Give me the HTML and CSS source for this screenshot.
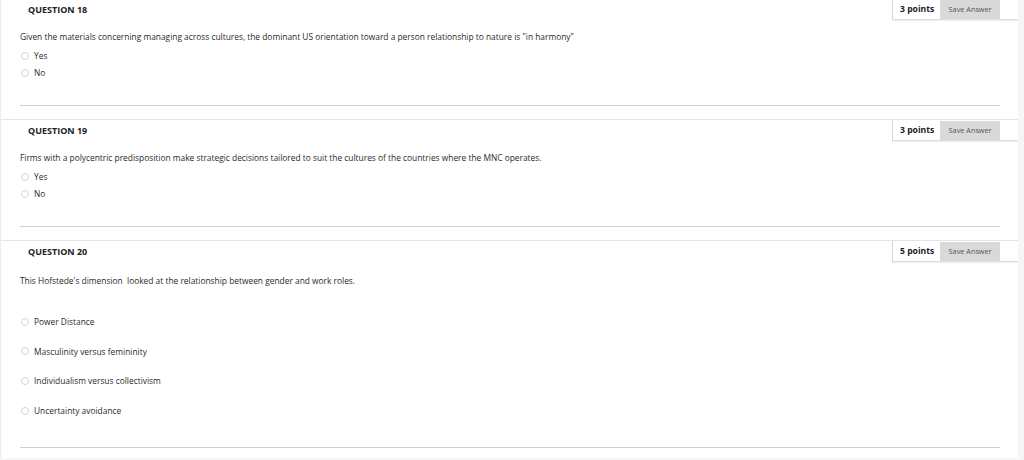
FILE: index.html
```html
<!DOCTYPE html>
<html lang="en">
<head>
<meta charset="utf-8">
<title>Questions</title>
<link rel="stylesheet" href="styles.css">
</head>
<body>
<div class="page">
  <section class="question first">
    <div class="q-head">
      <h3 class="q-title">QUESTION 18</h3>
      <div class="points"><span class="pts">3 points</span><button class="save">Save Answer</button></div>
    </div>
    <div class="q-body">
      <p class="q-text">Given the materials concerning managing across cultures, the dominant US orientation toward a person relationship to nature is "in harmony"</p>
      <ul class="options">
        <li><span class="radio"></span>Yes</li>
        <li><span class="radio"></span>No</li>
      </ul>
      <hr class="sep">
    </div>
  </section>
  <section class="question">
    <div class="q-head">
      <h3 class="q-title">QUESTION 19</h3>
      <div class="points"><span class="pts">3 points</span><button class="save">Save Answer</button></div>
    </div>
    <div class="q-body">
      <p class="q-text">Firms with a polycentric predisposition make strategic decisions tailored to suit the cultures of the countries where the MNC operates.</p>
      <ul class="options">
        <li><span class="radio"></span>Yes</li>
        <li><span class="radio"></span>No</li>
      </ul>
      <hr class="sep">
    </div>
  </section>
  <section class="question">
    <div class="q-head">
      <h3 class="q-title">QUESTION 20</h3>
      <div class="points"><span class="pts">5 points</span><button class="save">Save Answer</button></div>
    </div>
    <div class="q-body">
      <p class="q-text lower">This Hofstede's dimension&nbsp; looked at the relationship between gender and work roles.</p>
      <ul class="options spaced">
        <li><span class="radio"></span>Power Distance</li>
        <li><span class="radio"></span>Masculinity versus femininity</li>
        <li><span class="radio"></span>Individualism versus collectivism</li>
        <li><span class="radio"></span>Uncertainty avoidance</li>
      </ul>
      <hr class="sep last">
    </div>
  </section>
</div>
</body>
</html>
```
FILE: styles.css
```css
html, body {
  margin: 0;
  padding: 0;
}
body {
  background: #f6f6f6;
  font-family: "Open Sans", "Liberation Sans", sans-serif;
  color: #222;
  overflow: hidden;
}
.page {
  width: 1018px;
  height: 460px;
  background: #fff;
  border-left: 1px solid #ececec;
  box-sizing: border-box;
}
.question {
  border-top: 1px solid #e4e4e4;
}
.question.first {
  margin-top: -2px;
}
.q-head {
  display: flex;
  justify-content: space-between;
  align-items: stretch;
  height: 21px;
}
.q-title {
  margin: 0;
  padding-left: 27px;
  font-size: 9px;
  font-weight: 700;
  line-height: 21px;
  color: #222;
}
.points {
  display: flex;
  align-items: center;
  gap: 6px;
  width: 126px;
  box-sizing: border-box;
  padding: 1px 18px 1px 7px;
  border-left: 1px solid #d6d6d6;
  border-bottom: 1px solid #dedede;
  box-shadow: 0 1px 1px rgba(0,0,0,0.06);
}
.pts {
  font-size: 8.6px;
  font-weight: 700;
  color: #222;
  white-space: nowrap;
}
.save {
  width: 60px;
  height: 19px;
  padding: 0;
  border: none;
  background: #d9d9d9;
  font-family: inherit;
  font-size: 7.3px;
  color: #555;
}
.q-body {
  padding: 0 18px 0 19px;
}
.q-text {
  margin: 11px 0 0;
  font-size: 8.4px;
  line-height: 12px;
  color: #2a2a2a;
}
.q-text.lower {
  margin-top: 13px;
}
.options {
  list-style: none;
  margin: 4px 0 0;
  padding: 0;
}
.options li {
  display: flex;
  align-items: center;
  height: 17px;
  font-size: 8.4px;
  color: #2a2a2a;
}
.options.spaced {
  margin-top: 20px;
}
.options.spaced li {
  height: 29.6px;
}
.radio {
  width: 8px;
  height: 8px;
  border: 1px solid #d4d4d4;
  border-radius: 50%;
  margin: 0 5px 0 1px;
  box-sizing: border-box;
  background: #fff;
}
.sep {
  margin: 24px 0 13px;
  border: none;
  border-top: 1px solid #cfcfcf;
  height: 0;
}
.sep.last {
  margin-top: 22px;
}
```
